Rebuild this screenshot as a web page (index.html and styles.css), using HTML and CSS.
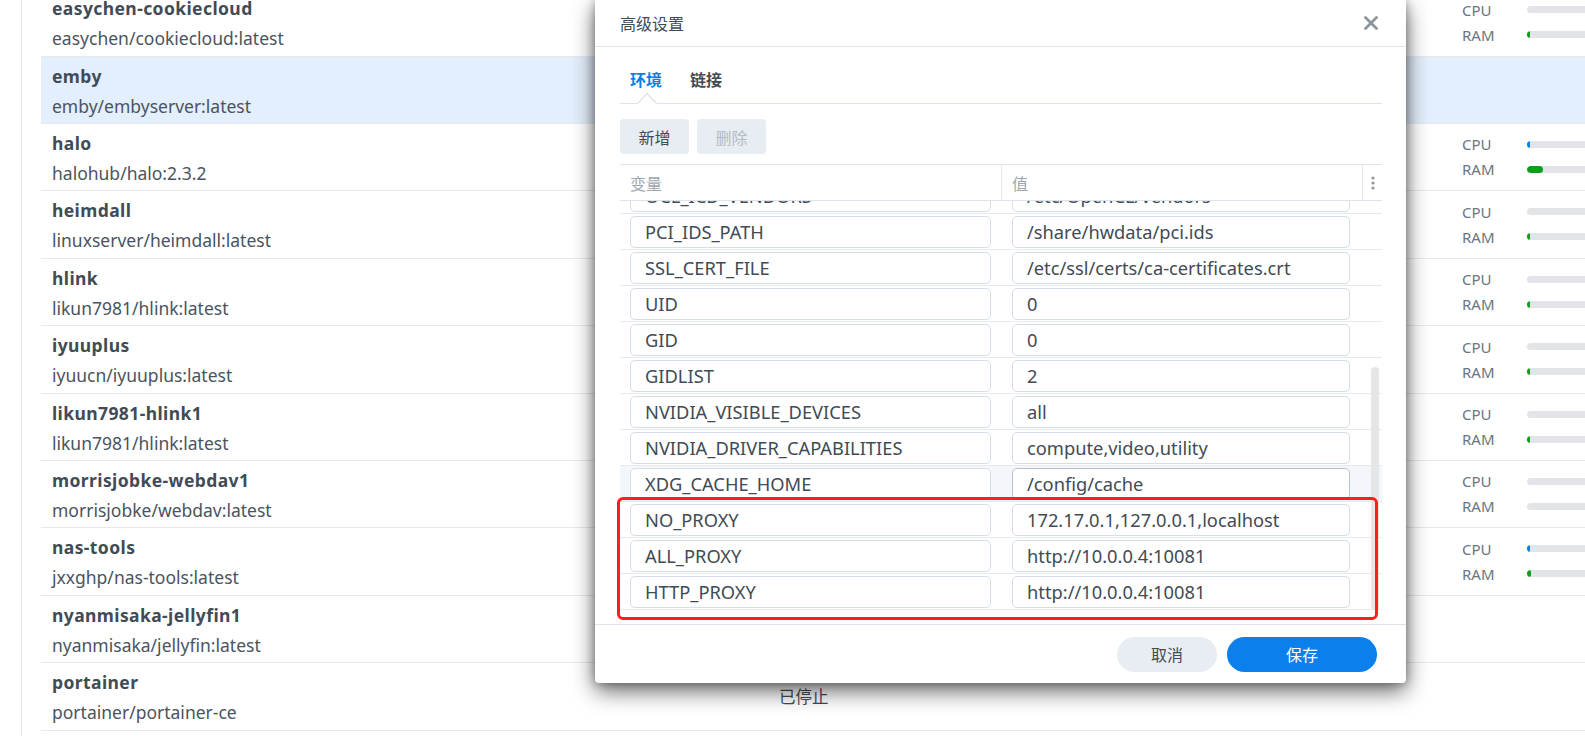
FILE: index.html
```html
<!DOCTYPE html>
<html lang="zh-CN">
<head>
    <meta charset="UTF-8">
    <title>容器</title>
    <link rel="stylesheet" href="styles.css">
</head>
<body>

    <div class="app">
        <div class="rail"></div>
        <main class="list">
            <div class="row">
                <div class="info"><div class="name">easychen-cookiecloud</div><div class="image">easychen/cookiecloud:latest</div></div>
                <div class="status">运行中</div>
                <div class="usage">
                    <span class="label">CPU</span><span class="bar"></span>
                    <span class="label">RAM</span><span class="bar"><i class="fill ram" style="width:3px"></i></span>
                </div>
            </div>
            <div class="row selected">
                <div class="info"><div class="name">emby</div><div class="image">emby/embyserver:latest</div></div>
                <div class="status">已停止</div>
                <div class="usage"></div>
            </div>
            <div class="row">
                <div class="info"><div class="name">halo</div><div class="image">halohub/halo:2.3.2</div></div>
                <div class="status">运行中</div>
                <div class="usage">
                    <span class="label">CPU</span><span class="bar"><i class="fill cpu" style="width:3px"></i></span>
                    <span class="label">RAM</span><span class="bar"><i class="fill ram" style="width:16px"></i></span>
                </div>
            </div>
            <div class="row">
                <div class="info"><div class="name">heimdall</div><div class="image">linuxserver/heimdall:latest</div></div>
                <div class="status">运行中</div>
                <div class="usage">
                    <span class="label">CPU</span><span class="bar"></span>
                    <span class="label">RAM</span><span class="bar"><i class="fill ram" style="width:3px"></i></span>
                </div>
            </div>
            <div class="row">
                <div class="info"><div class="name">hlink</div><div class="image">likun7981/hlink:latest</div></div>
                <div class="status">运行中</div>
                <div class="usage">
                    <span class="label">CPU</span><span class="bar"></span>
                    <span class="label">RAM</span><span class="bar"><i class="fill ram" style="width:3px"></i></span>
                </div>
            </div>
            <div class="row">
                <div class="info"><div class="name">iyuuplus</div><div class="image">iyuucn/iyuuplus:latest</div></div>
                <div class="status">运行中</div>
                <div class="usage">
                    <span class="label">CPU</span><span class="bar"></span>
                    <span class="label">RAM</span><span class="bar"><i class="fill ram" style="width:3px"></i></span>
                </div>
            </div>
            <div class="row">
                <div class="info"><div class="name">likun7981-hlink1</div><div class="image">likun7981/hlink:latest</div></div>
                <div class="status">运行中</div>
                <div class="usage">
                    <span class="label">CPU</span><span class="bar"></span>
                    <span class="label">RAM</span><span class="bar"><i class="fill ram" style="width:3px"></i></span>
                </div>
            </div>
            <div class="row">
                <div class="info"><div class="name">morrisjobke-webdav1</div><div class="image">morrisjobke/webdav:latest</div></div>
                <div class="status">运行中</div>
                <div class="usage">
                    <span class="label">CPU</span><span class="bar"></span>
                    <span class="label">RAM</span><span class="bar"></span>
                </div>
            </div>
            <div class="row">
                <div class="info"><div class="name">nas-tools</div><div class="image">jxxghp/nas-tools:latest</div></div>
                <div class="status">运行中</div>
                <div class="usage">
                    <span class="label">CPU</span><span class="bar"><i class="fill cpu" style="width:3px"></i></span>
                    <span class="label">RAM</span><span class="bar"><i class="fill ram" style="width:4px"></i></span>
                </div>
            </div>
            <div class="row">
                <div class="info"><div class="name">nyanmisaka-jellyfin1</div><div class="image">nyanmisaka/jellyfin:latest</div></div>
                <div class="status">已停止</div>
                <div class="usage"></div>
            </div>
            <div class="row">
                <div class="info"><div class="name">portainer</div><div class="image">portainer/portainer-ce</div></div>
                <div class="status">已停止</div>
                <div class="usage"></div>
            </div>
            <div class="row"></div>
        </main>
    </div>

    <div class="dialog">
        <header class="dlg-head">
            <span class="dlg-title">高级设置</span>
            <svg class="close" width="14" height="14" viewBox="0 0 14 14"><path d="M1.5 1.5l11 11M12.5 1.5l-11 11" stroke="#8c949c" stroke-width="2.8" stroke-linecap="round"/></svg>
        </header>

        <section class="dlg-body">
            <nav class="tabs">
                <span class="tab active">环境</span>
                <span class="tab">链接</span>
            </nav>

            <div class="toolbar">
                <button class="btn">新增</button>
                <button class="btn" disabled>删除</button>
            </div>

            <div class="table">
                <div class="thead">
                    <div class="th">变量</div>
                    <div class="th">值</div>
                    <div class="th menu">
                        <svg width="4" height="14" viewBox="0 0 4 14"><circle cx="2" cy="2" r="1.6" fill="#8f979f"/><circle cx="2" cy="7" r="1.6" fill="#8f979f"/><circle cx="2" cy="12" r="1.6" fill="#8f979f"/></svg>
                    </div>
                </div>
                <div class="tbody">
                    <div class="rows">
                        <div class="trow"><div class="td"><input class="field" value="OCL_ICD_VENDORS" readonly></div><div class="td val"><input class="field" value="/etc/OpenCL/vendors" readonly></div></div>
                        <div class="trow"><div class="td"><input class="field" value="PCI_IDS_PATH" readonly></div><div class="td val"><input class="field" value="/share/hwdata/pci.ids" readonly></div></div>
                        <div class="trow"><div class="td"><input class="field" value="SSL_CERT_FILE" readonly></div><div class="td val"><input class="field" value="/etc/ssl/certs/ca-certificates.crt" readonly></div></div>
                        <div class="trow"><div class="td"><input class="field" value="UID" readonly></div><div class="td val"><input class="field" value="0" readonly></div></div>
                        <div class="trow"><div class="td"><input class="field" value="GID" readonly></div><div class="td val"><input class="field" value="0" readonly></div></div>
                        <div class="trow"><div class="td"><input class="field" value="GIDLIST" readonly></div><div class="td val"><input class="field" value="2" readonly></div></div>
                        <div class="trow"><div class="td"><input class="field" value="NVIDIA_VISIBLE_DEVICES" readonly></div><div class="td val"><input class="field" value="all" readonly></div></div>
                        <div class="trow"><div class="td"><input class="field" value="NVIDIA_DRIVER_CAPABILITIES" readonly></div><div class="td val"><input class="field" value="compute,video,utility" readonly></div></div>
                        <div class="trow hover"><div class="td"><input class="field" value="XDG_CACHE_HOME" readonly></div><div class="td val"><input class="field" value="/config/cache" readonly></div></div>
                        <div class="trow"><div class="td"><input class="field" value="NO_PROXY" readonly></div><div class="td val"><input class="field" value="172.17.0.1,127.0.0.1,localhost" readonly></div></div>
                        <div class="trow"><div class="td"><input class="field" value="ALL_PROXY" readonly></div><div class="td val"><input class="field" value="http://10.0.0.4:10081" readonly></div></div>
                        <div class="trow"><div class="td"><input class="field" value="HTTP_PROXY" readonly></div><div class="td val"><input class="field" value="http://10.0.0.4:10081" readonly></div></div>
                    </div>
                    <div class="scroll-thumb"></div>
                </div>
            </div>
        </section>

        <footer class="dlg-foot">
            <button class="pill cancel">取消</button>
            <button class="pill save">保存</button>
        </footer>

        <div class="mark"></div>
    </div>

</body>
</html>
```

FILE: styles.css
```css
* {
    margin: 0;
    padding: 0;
    box-sizing: border-box;
}

html {
    overflow: hidden;
}

body {
    font-family: "Noto Sans", "Noto Sans CJK SC", sans-serif;
    color: #414b55;
    background-color: #fff;
    width: 1585px;
    height: 736px;
    overflow: hidden;
    position: relative;
}

/* page behind the dialog */

.app {
    display: flex;
    height: 100%;
    overflow: hidden;
}

.rail {
    width: 22px;
    flex-shrink: 0;
    border-right: 1px solid #e3e8ee;
}

.list {
    flex: 1;
    padding-left: 19px;
    margin-top: -10.8px;
}

.row {
    display: grid;
    grid-template-columns: 738px 683px 1fr;
    height: 67.4px;
    border-bottom: 1px solid #e6eaef;
}

.row.selected {
    background-color: #e3effc;
}

.info {
    padding: 7px 0 0 11px;
}

.name {
    font-size: 17.5px;
    font-weight: bold;
    line-height: 24px;
    letter-spacing: 0.4px;
}

.image {
    font-size: 17.5px;
    line-height: 24px;
    margin-top: 6px;
    color: #4a5460;
}

.status {
    font-size: 16.5px;
    display: flex;
    align-items: center;
}

.usage {
    display: grid;
    grid-template-columns: 65px 120px;
    grid-auto-rows: 25px;
    align-items: center;
    padding-top: 8px;
}

.usage .label {
    font-size: 15px;
    color: #6a7581;
}

.bar {
    display: block;
    height: 7px;
    border-radius: 4px;
    background-color: #e2e4e7;
    overflow: hidden;
}

.fill {
    display: block;
    height: 100%;
    border-radius: 4px;
}

.fill.cpu {
    background-color: #0a80ee;
}

.fill.ram {
    background-color: #0e9e1c;
}

/* dialog */

.dialog {
    position: absolute;
    left: 595px;
    top: 0;
    width: 811px;
    height: 683px;
    background-color: #fff;
    border-radius: 0 0 4px 4px;
    box-shadow: 0 8px 22px rgba(0, 0, 0, 0.6), 0 0 10px rgba(0, 0, 0, 0.3);
    display: flex;
    flex-direction: column;
}

.dlg-head {
    height: 47px;
    border-bottom: 1px solid #e0e6ec;
    display: flex;
    align-items: center;
    justify-content: space-between;
    padding: 0 28px 0 25px;
    flex-shrink: 0;
}

.dlg-title {
    font-size: 16px;
}

.dlg-body {
    padding: 0 24px 0 25px;
}

.tabs {
    display: flex;
    height: 57px;
    border-bottom: 1px solid #dde3ea;
}

.tab {
    position: relative;
    padding: 23px 10px 0;
    margin-right: 8px;
    font-size: 16px;
    line-height: 20px;
    font-weight: bold;
}

.tab.active {
    color: #0a7fe6;
}

.tab.active::after {
    content: "";
    position: absolute;
    left: 50%;
    bottom: -7px;
    width: 13px;
    height: 13px;
    margin-left: -6px;
    background-color: #fff;
    border-top: 1px solid #d5dde6;
    border-left: 1px solid #d5dde6;
    transform: rotate(45deg);
}

.toolbar {
    display: flex;
    gap: 8px;
    margin-top: 15px;
}

.btn {
    width: 69px;
    height: 35px;
    border: none;
    border-radius: 4px;
    background-color: #e8edf3;
    font-family: inherit;
    font-size: 16px;
    color: #414b55;
}

.btn:disabled {
    color: #b4bbc3;
}

.table {
    margin-top: 10px;
}

.thead {
    display: grid;
    grid-template-columns: 381px 361px 1fr;
    height: 37px;
    border-top: 1px solid #dde3ea;
    border-bottom: 1px solid #dde3ea;
}

.th {
    display: flex;
    align-items: center;
    padding-left: 10px;
    font-size: 16px;
    color: #9ea6b0;
}

.th + .th {
    border-left: 1px solid #e3e8ee;
}

.th.menu {
    padding: 0;
    justify-content: center;
}

.tbody {
    position: relative;
    height: 419px;
    overflow: hidden;
}

.rows {
    margin-top: -23px;
}

.trow {
    display: grid;
    grid-template-columns: 381px 361px 1fr;
    height: 36px;
    align-items: center;
    border-bottom: 1px solid #e6eaef;
}

.trow.hover {
    background-color: #f3f7fc;
}

.td {
    padding: 0 10px;
}

.td.val {
    padding: 0 12px 0 11px;
}

.field {
    display: block;
    width: 100%;
    height: 32px;
    padding: 0 14px;
    border: 1px solid #d6dee7;
    border-radius: 5px;
    background-color: #fff;
    font-family: inherit;
    font-size: 18.3px;
    color: #414b55;
    outline: none;
}

.trow.hover .val .field {
    border-color: #b8c1cb;
}

.scroll-thumb {
    position: absolute;
    right: 3px;
    top: 166px;
    width: 8px;
    height: 243px;
    border-radius: 4px;
    background-color: #e5e6e8;
}

.dlg-foot {
    margin-top: auto;
    height: 59px;
    border-top: 1px solid #dde3ea;
    display: flex;
    justify-content: flex-end;
    align-items: center;
    gap: 10px;
    padding-right: 29px;
}

.pill {
    height: 35px;
    border: none;
    border-radius: 18px;
    font-family: inherit;
    font-size: 16px;
}

.pill.cancel {
    width: 100px;
    background-color: #e8edf3;
    color: #414b55;
}

.pill.save {
    width: 150px;
    background-color: #0b80ec;
    color: #fff;
}

/* red annotation frame */
.mark {
    position: absolute;
    left: 22px;
    top: 497px;
    width: 761px;
    height: 123px;
    border: 3.5px solid #ff1e1e;
    border-radius: 6px;
}
```
